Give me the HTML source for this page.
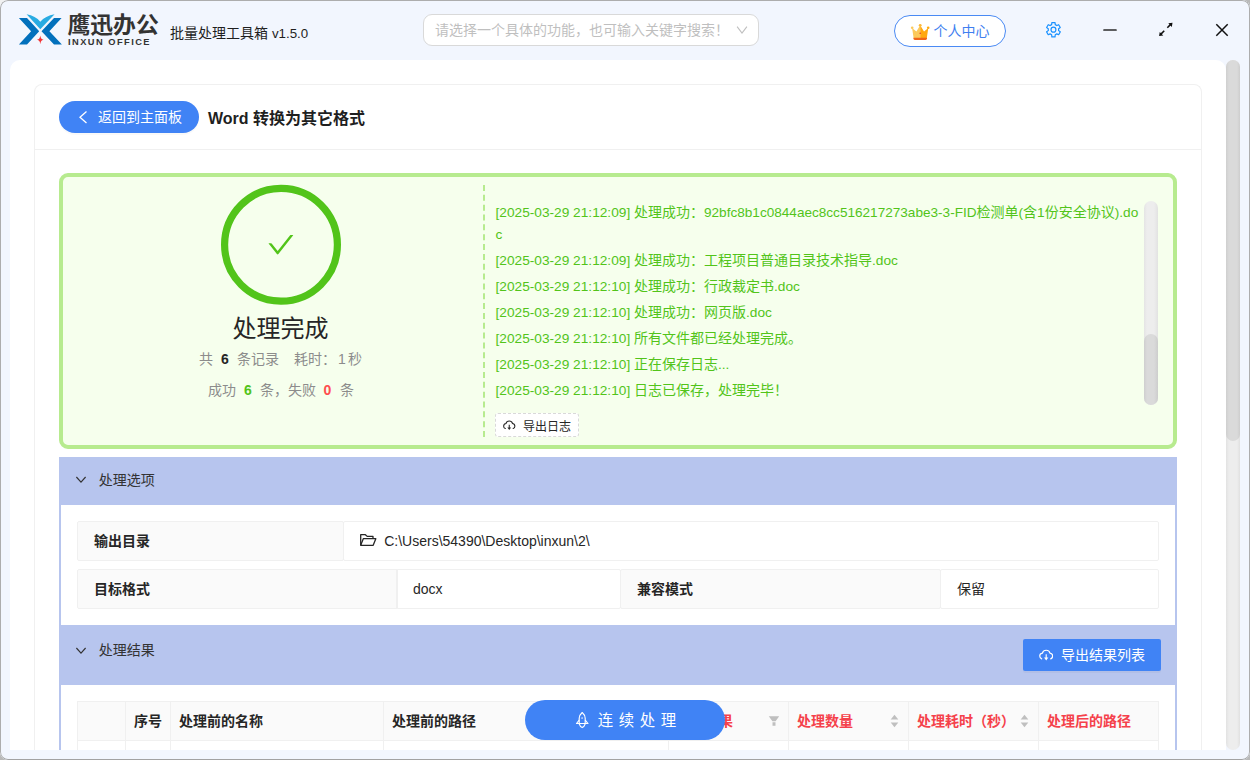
<!DOCTYPE html>
<html lang="zh-CN">
<head>
<meta charset="utf-8">
<title>鹰迅办公 批量处理工具箱</title>
<style>
*{box-sizing:border-box;margin:0;padding:0}
html,body{width:1250px;height:760px;overflow:hidden;background:#b9b9b9}
body{font-family:"Liberation Sans","Noto Sans CJK SC",sans-serif;font-size:14px;color:#222;position:relative}
.abs{position:absolute}
#win{position:absolute;left:0;top:0;width:1250px;height:760px;background:#f2f6fe;border-radius:8px;overflow:hidden}
#frame{position:absolute;left:0;top:0;width:1250px;height:760px;border:1px solid #adadad;border-bottom:1.500px solid #a2a2a2;border-radius:8px;pointer-events:none}
#tl{position:absolute;left:0;top:0;width:8px;height:8px;background:#f1f1f1}
/* header */
#apptitle{left:170px;top:24.500px;font-size:14px;line-height:16px;color:#1f1f1f;white-space:nowrap}
#brand-cn{left:67.500px;top:10px;font-size:22.800px;line-height:30px;font-weight:700;color:#333;letter-spacing:0px;white-space:nowrap}
#brand-en{left:68px;top:36px;font-size:9.3px;line-height:12px;font-weight:700;color:#333;letter-spacing:1.45px;white-space:nowrap}
#search{left:423px;top:14px;width:336px;height:32px;border:1px solid #d9d9d9;border-radius:9px;background:#fff}
#search span{position:absolute;left:11px;top:6px;font-size:14px;line-height:18px;color:#bfbfbf;white-space:nowrap}
#user{left:894px;top:15px;width:112px;height:32px;border:1px solid #4a8af4;border-radius:16px;background:#fff}
#user span{position:absolute;left:38.500px;top:5.500px;font-size:14px;line-height:18px;color:#3f7ff0;white-space:nowrap}
/* panel */
#panel{left:10px;top:60px;width:1216px;height:690px;background:#fff;border-radius:10px 10px 0 0}
#scroll{left:1226px;top:60px;width:14px;height:690px;background:linear-gradient(to right,#e2e2e2,#ededed 3px,#ededed 11px,#e0e0e0);border-radius:7px}
#scroll i{position:absolute;left:0px;top:0px;width:14px;height:381px;background:linear-gradient(to right,#cfcfcf,#dadada 3px,#dadada 11px,#cdcdcd);border-radius:7px}
#card{left:34px;top:84px;width:1168px;height:666px;border:1px solid #f0f0f0;border-bottom:none;border-radius:8px 8px 0 0;background:#fff}
#divider{left:35px;top:149px;width:1166px;height:1px;background:#f0f0f0}
#back{left:59px;top:101px;width:140px;height:32px;border-radius:16px;background:#4083f5;box-shadow:0 2px 0 rgba(0,0,0,.025)}
#back span{position:absolute;left:39px;top:7px;font-size:14px;line-height:18px;color:#fff;white-space:nowrap}
#ptitle{left:208px;top:107.500px;font-size:16px;line-height:22px;font-weight:700;color:#1f1f1f;white-space:nowrap}
/* green box */
#gbox{left:59px;top:173px;width:1118px;height:276px;border:4px solid #b7eb8f;border-radius:9px;background:#f6ffed}
#gdash{left:483px;top:185px;width:0;height:252px;border-left:2px dashed #b7eb8f}
#done{left:180.500px;top:313.700px;width:200px;text-align:center;font-size:24px;line-height:30px;color:#262626}
.st{font-size:14px;line-height:18px;color:#8c8c8c;white-space:nowrap}
.log{left:495.5px;font-size:14px;line-height:22px;color:#52c41a;white-space:nowrap}
.log i{font-style:normal;font-size:13.7px}
#lscroll{left:1144px;top:201px;width:13.500px;height:204px;background:linear-gradient(to right,#e4e4e4,#ededed 3px,#ededed 10px,#e2e2e2);border-radius:7px}
#lscroll i{position:absolute;left:0;top:133px;width:13.500px;height:71px;background:linear-gradient(to right,#cfcfcf,#dadada 3px,#dadada 10px,#cdcdcd);border-radius:7px}
#exlog{left:495px;top:413px;width:84px;height:24px;border:1px dashed #d9d9d9;border-radius:3px;background:#fff}
#exlog span{position:absolute;left:27px;top:4.500px;font-size:12px;line-height:16px;color:#262626;white-space:nowrap}
/* sections */
.shead{left:59px;width:1118px;background:#b7c5ee}
.shead span{position:absolute;left:39.800px;font-size:14px;line-height:18px;color:#333;white-space:nowrap}
.sbody{left:59px;width:1118px;border-left:2px solid #b7c5ee;border-right:2px solid #b7c5ee;background:#fff}
.cell{border:1px solid #f0f0f0;border-radius:2px;font-size:14px;line-height:18px;color:#262626;white-space:nowrap}
.cell.l{background:#fafafa;font-weight:700}
.cell span{position:absolute;left:16px;top:10px}
#exres{left:1023px;top:639px;width:138px;height:32px;background:#4083f5;border-radius:2px;box-shadow:0 2px 0 rgba(0,0,0,.03)}
#exres span{position:absolute;left:38px;top:7px;font-size:14px;line-height:18px;color:#fff;white-space:nowrap}
.th{top:701px;height:40px;background:#fafafa;border-bottom:1px solid #f0f0f0;border-top:1px solid #f0f0f0;border-left:1px solid #f0f0f0;font-size:14px;font-weight:700;line-height:18px;color:#262626;white-space:nowrap}
.th span{position:absolute;left:8px;top:10px}
.th.r{color:#f5414b}
.td{top:741px;height:9px;border-left:1px solid #f0f0f0;background:#fff}
#cont{left:525px;top:700px;width:200px;height:40px;border-radius:20px;background:#4083f5}
#cont span{position:absolute;left:72.700px;top:11px;font-size:15.400px;line-height:20px;color:#fff;letter-spacing:5.600px;white-space:nowrap}
</style>
</head>
<body>
<div id="tl"></div>
<div id="win">
<!-- header -->
<svg class="abs" style="left:14px;top:8px" width="52" height="44" viewBox="14 8 52 44">
<path d="M18.9 18.1H27L39.2 31.2 27 44.4H18.9L31.1 31.2Z" fill="#0270bc"/>
<path d="M61.6 18.1H54L41.5 31.2 54 44.4H61.9L49.4 31.2Z" fill="#0270bc"/>
<path d="M26.600 14.300L40.300 29.300 54.600 14.300C48.500 15.300 43.500 18 40.300 21.800 37.300 18 32.500 15.300 26.600 14.300Z" fill="#29abe2" stroke="#f2f6fe" stroke-width="0.800" paint-order="stroke"/>
<path d="M40.3 35.6C40.7 38.2 41.4 39.3 43.6 39.8 41.4 40.3 40.7 41.4 40.3 44.2 39.9 41.4 39.2 40.3 37 39.8 39.2 39.3 39.9 38.2 40.3 35.6Z" fill="#f23535"/>
</svg>
<div class="abs" id="brand-cn">鹰迅办公</div>
<div class="abs" id="brand-en">INXUN OFFICE</div>
<div class="abs" id="apptitle">批量处理工具箱 <span style="font-size:13.300px">v1.5.0</span></div>
<div class="abs" id="search"><span>请选择一个具体的功能，也可输入关键字搜索！</span><svg class="abs" style="left:312px;top:10px" width="12" height="10" viewBox="0 0 12 10"><path d="M1.1 1.6L6 8 10.9 1.6" fill="none" stroke="#bfbfbf" stroke-width="1.1"/></svg></div>
<div class="abs" id="user"><svg class="abs" style="left:14px;top:6px" width="22" height="19" viewBox="909 22 22 19">
<path d="M913.600 37.900L912.100 28 916.400 31.400 920.200 25.200V37.900Z" fill="#fbc95b"/>
<path d="M926.800 37.900L928.300 28 924 31.400 920.200 25.200V37.900Z" fill="#ffa910"/>
<circle cx="912.200" cy="27.700" r="1.300" fill="#fbc95b"/><circle cx="920.200" cy="25.300" r="1.400" fill="#fdb938"/><circle cx="928.200" cy="27.700" r="1.300" fill="#ffa910"/>
<path d="M913.400 37.800H927V38.600Q927 40 925.600 40H914.800Q913.400 40 913.400 38.600Z" fill="#f0651a"/>
<circle cx="920.200" cy="33.200" r=".800" fill="#e8392b"/>
</svg><span>个人中心</span></div>

<svg class="abs" style="left:1045.350px;top:21.100px" width="16.900" height="17.400" preserveAspectRatio="none" viewBox="-1 -1 18 18"><path d="M6.08 2.74 L6.29 0.59 L9.71 0.59 L9.92 2.74 L11.60 3.71 L13.56 2.82 L15.27 5.78 L13.51 7.03 L13.51 8.97 L15.27 10.22 L13.56 13.18 L11.60 12.29 L9.92 13.26 L9.71 15.41 L6.29 15.41 L6.08 13.26 L4.40 12.29 L2.44 13.18 L0.73 10.22 L2.49 8.97 L2.49 7.03 L0.73 5.78 L2.44 2.82 L4.40 3.71Z" fill="none" stroke="#1890ff" stroke-width="1.25" stroke-linejoin="round"/><circle cx="8" cy="8" r="2.6" fill="none" stroke="#1890ff" stroke-width="1.25"/></svg>
<svg class="abs" style="left:1100px;top:24px" width="20" height="12" viewBox="0 0 20 12"><path d="M4 6H16" stroke="#2b2b2b" stroke-width="1.700" stroke-linecap="round"/></svg>
<svg class="abs" style="left:1156.400px;top:20.300px" width="19.200" height="19.200" viewBox="0 0 20 20"><path d="M4.6 15.2L8.6 11.2M11.8 8L15.8 4" stroke="#111" stroke-width="1.6" fill="none"/><path d="M3.2 16.8L3.9 12.4 7.6 16.1ZM17.2 2.8L16.5 7.2 12.8 3.5Z" fill="#111"/></svg>
<svg class="abs" style="left:1214px;top:22px" width="16" height="16" viewBox="0 0 16 16"><path d="M2.3 2.3L13.7 13.7M13.7 2.3L2.3 13.7" stroke="#111" stroke-width="1.5" fill="none"/></svg>
<div class="abs" id="panel"></div>
<div class="abs" id="scroll"><i></i></div>
<div class="abs" id="card"></div>
<div class="abs" id="divider"></div>
<div class="abs" id="back"><svg class="abs" style="left:18.800px;top:8.800px" width="12" height="14" viewBox="0 0 12 14"><path d="M8.5 1.5L2 7.2 8.5 13" fill="none" stroke="#fff" stroke-width="1.3"/></svg><span>返回到主面板</span></div>
<div class="abs" id="ptitle">Word 转换为其它格式</div>

<div class="abs" id="gbox"></div>
<div class="abs" id="gdash"></div>
<svg class="abs" style="left:219px;top:183px" width="124" height="124" viewBox="219 183 124 124"><circle cx="281" cy="244.8" r="56.4" fill="none" stroke="#52c41a" stroke-width="7.2"/><g transform="translate(265.4 229.15) scale(0.03027)"><path d="M912 190h-69.900c-9.800 0-19.100 4.500-25.100 12.200L404.700 724.500 207 474a32 32 0 0 0-25.100-12.200H112c-6.700 0-10.400 7.700-6.300 12.900l273.900 347c12.800 16.200 37.400 16.200 50.300 0l488.400-618.900c4.100-5.100.4-12.800-6.300-12.800z" fill="#52c41a"/></g></svg>
<div class="abs" id="done">处理完成</div>
<div class="abs st" style="left:199px;top:350px">共</div><div class="abs st" style="left:221px;top:350px;color:#262626;font-weight:700">6</div><div class="abs st" style="left:237px;top:350px">条记录</div><div class="abs st" style="left:294px;top:350px">耗时：</div><div class="abs st" style="left:338px;top:350px">1</div><div class="abs st" style="left:348px;top:350px">秒</div>
<div class="abs st" style="left:208px;top:381px">成功</div><div class="abs st" style="left:244px;top:381px;color:#52c41a;font-weight:700">6</div><div class="abs st" style="left:260px;top:381px">条，失败</div><div class="abs st" style="left:323.5px;top:381px;color:#ff4d4f;font-weight:700">0</div><div class="abs st" style="left:340px;top:381px">条</div>

<div class="abs log" style="top:201px"><i>[2025-03-29 21:12:09] </i>处理成功：<i style="font-size:13.590px">92bfc8b1c0844aec8cc516217273abe3-3-FID</i>检测单<i>(</i>含<i>1</i>份安全协议<i>).do</i></div>
<div class="abs log" style="top:223px"><i>c</i></div>
<div class="abs log" style="top:249px"><i>[2025-03-29 21:12:09] </i>处理成功：工程项目普通目录技术指导<i>.doc</i></div>
<div class="abs log" style="top:275px"><i>[2025-03-29 21:12:10] </i>处理成功：行政裁定书<i>.doc</i></div>
<div class="abs log" style="top:301px"><i>[2025-03-29 21:12:10] </i>处理成功：网页版<i>.doc</i></div>
<div class="abs log" style="top:327px"><i>[2025-03-29 21:12:10] </i>所有文件都已经处理完成。</div>
<div class="abs log" style="top:353px"><i>[2025-03-29 21:12:10] </i>正在保存日志<i>...</i></div>
<div class="abs log" style="top:379px"><i>[2025-03-29 21:12:10] </i>日志已保存，处理完毕！</div>
<div class="abs" id="lscroll"><i></i></div>
<div class="abs" id="exlog"><svg class="abs" style="left:7px;top:6px" width="12.5" height="10.7" viewBox="0 0 14 12"><path d="M2.6 9.6C1.3 9.1.7 8 .7 6.9.7 5.4 1.8 4.2 3.3 4 3.8 2.3 5.3 1.2 7 1.2S10.200 2.300 10.700 4C12.200 4.200 13.300 5.400 13.300 6.900 13.300 8 12.700 9.100 11.400 9.600" fill="none" stroke="#262626" stroke-width="1.2" stroke-linecap="round"/><path d="M7 5.200V9.600" stroke="#262626" stroke-width="1.2" fill="none"/><path d="M4.900 8.300H9.100L7 11.300Z" fill="#262626"/></svg><span>导出日志</span></div>

<!-- section 1 -->
<div class="abs shead" style="top:457px;height:48px"><svg class="abs" style="left:16px;top:19.200px" width="12" height="8" viewBox="0 0 12 8"><path d="M1.400 1L6 6.100 10.600 1" fill="none" stroke="#333" stroke-width="1.150"/></svg><span style="top:14px">处理选项</span></div>
<div class="abs sbody" style="top:505px;height:120px"></div>
<div class="abs cell l" style="left:77px;top:521px;width:267px;height:40px"><span>输出目录</span></div>
<div class="abs cell" style="left:343px;top:521px;width:816px;height:40px"><svg class="abs" style="left:15px;top:11px" width="18" height="14" viewBox="0 0 18 14"><path d="M1.700 12.300V1.700H6.400L8.200 3.400H14V5.600" fill="none" stroke="#262626" stroke-width="1.300" stroke-linejoin="round"/><path d="M1.700 12.300L4.300 5.700H16.800L14.200 12.300Z" fill="none" stroke="#262626" stroke-width="1.300" stroke-linejoin="round"/></svg><span style="left:40.200px">C:\Users\54390\Desktop\inxun\2\</span></div>
<div class="abs cell l" style="left:77px;top:569px;width:321px;height:40px"><span>目标格式</span></div>
<div class="abs cell" style="left:396px;top:569px;width:225px;height:40px"><span>docx</span></div>
<div class="abs cell l" style="left:620px;top:569px;width:321px;height:40px"><span>兼容模式</span></div>
<div class="abs cell" style="left:940px;top:569px;width:219px;height:40px"><span>保留</span></div>

<!-- section 2 -->
<div class="abs shead" style="top:625px;height:60px"><svg class="abs" style="left:16px;top:21.500px" width="12" height="8" viewBox="0 0 12 8"><path d="M1.400 1L6 6.100 10.600 1" fill="none" stroke="#333" stroke-width="1.150"/></svg><span style="top:16px">处理结果</span></div>
<div class="abs sbody" style="top:685px;height:65px"></div>
<div class="abs" id="exres"><svg class="abs" style="left:15.7px;top:10px" width="14.4" height="12.3" viewBox="0 0 14 12"><path d="M2.6 9.6C1.3 9.1.7 8 .7 6.9.7 5.4 1.8 4.2 3.3 4 3.8 2.3 5.3 1.2 7 1.2S10.200 2.300 10.700 4C12.200 4.200 13.300 5.400 13.300 6.900 13.300 8 12.700 9.100 11.400 9.600" fill="none" stroke="#fff" stroke-width="1.15" stroke-linecap="round"/><path d="M7 5.200V9.600" stroke="#fff" stroke-width="1.15" fill="none"/><path d="M4.900 8.300H9.100L7 11.300Z" fill="#fff"/></svg><span>导出结果列表</span></div>

<div class="abs th" style="left:77px;width:48px"></div>
<div class="abs th" style="left:125px;width:46px"><span>序号</span></div>
<div class="abs th" style="left:170px;width:214px"><span>处理前的名称</span></div>
<div class="abs th" style="left:383px;width:286px"><span>处理前的路径</span></div>
<div class="abs th r" style="left:668px;width:121px"><span>处理结果</span></div>
<div class="abs th r" style="left:788px;width:121px"><span>处理数量</span></div>
<div class="abs th r" style="left:908px;width:131px"><span>处理耗时（秒）</span></div>
<div class="abs th r" style="left:1038px;width:121px;border-right:1px solid #f0f0f0"><span>处理后的路径</span></div>

<div class="abs td" style="left:77px;width:48px"></div><div class="abs td" style="left:125px;width:46px"></div><div class="abs td" style="left:170px;width:214px"></div><div class="abs td" style="left:383px;width:286px"></div><div class="abs td" style="left:668px;width:121px"></div><div class="abs td" style="left:788px;width:121px"></div><div class="abs td" style="left:908px;width:131px"></div><div class="abs td" style="left:1038px;width:121px;border-right:1px solid #f0f0f0"></div>
<svg class="abs" style="left:768px;top:715px" width="12" height="12" viewBox="0 0 12 12"><path d="M.800 1.200H11.200L7.600 6.300H4.400ZM4.500 7.300H7.500V10.800H4.500Z" fill="#bfbfbf"/></svg><svg class="abs" style="left:890px;top:714px" width="9" height="14" viewBox="0 0 9 14"><path d="M4.500 .800L8.300 5.600H.700ZM4.500 13.200L8.300 8.400H.700Z" fill="#bfbfbf"/></svg><svg class="abs" style="left:1020px;top:714px" width="9" height="14" viewBox="0 0 9 14"><path d="M4.500 .800L8.300 5.600H.700ZM4.500 13.200L8.300 8.400H.700Z" fill="#bfbfbf"/></svg>
<div class="abs" id="cont"><svg class="abs" style="left:49px;top:10px" width="17" height="20" viewBox="574 710 17 20"><path d="M582.200 712.500C580.200 714.300 579.200 716 579.200 718.200V723.500H585.200V718.200C585.200 716 584.200 714.300 582.200 712.500Z" fill="none" stroke="#fff" stroke-width="1.150" stroke-linejoin="round"/><path d="M579.200 720.200L576.500 723.500H588L585.200 720.200" fill="none" stroke="#fff" stroke-width="1.150" stroke-linejoin="round"/><path d="M579.200 723.800C579.800 725.700 580.800 726.900 582.200 727.500 583.600 726.900 584.600 725.700 585.200 723.800" fill="none" stroke="#fff" stroke-width="1.150"/><circle cx="582.100" cy="718" r=".850" fill="#dbe8ff"/></svg><span>连续处理</span></div>
<div id="frame"></div>
</div>
</body>
</html>
